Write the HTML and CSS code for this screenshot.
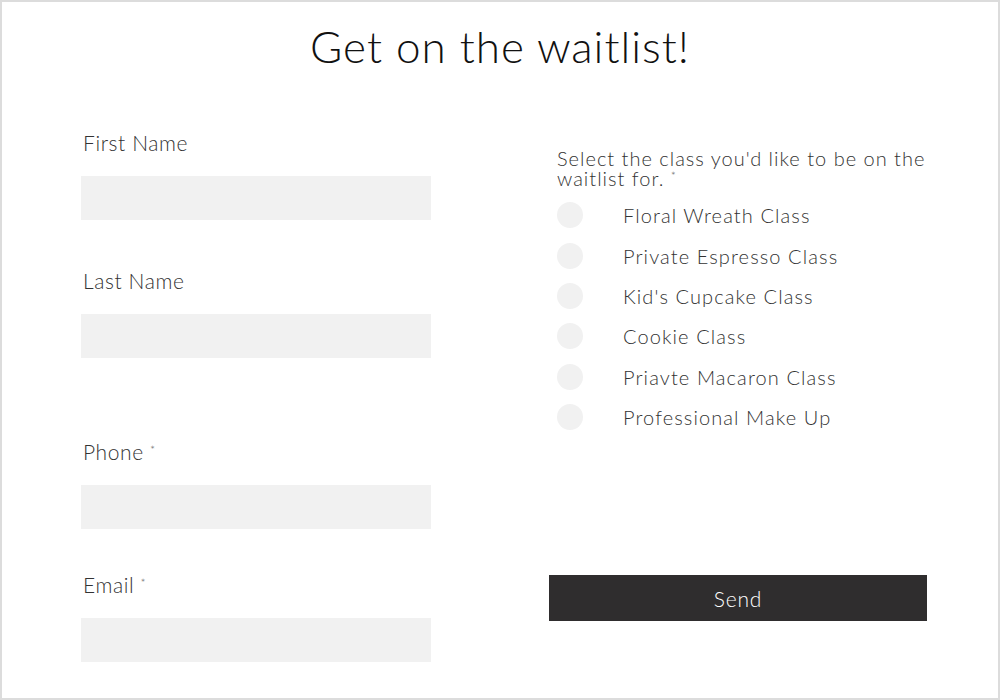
FILE: index.html
```html
<!DOCTYPE html>
<html lang="en">
<head>
    <meta charset="UTF-8">
    <meta name="viewport" content="width=device-width, initial-scale=1.0">
    <title>Get on the waitlist</title>
    <link rel="stylesheet" href="styles.css">
</head>
<body>
    <div class="page">
        <h1 class="title">Get on the waitlist!</h1>

        <form class="waitlist-form" onsubmit="return false;">
            <!-- Contact details -->
            <div class="column contact">
                <div class="field">
                    <label class="field-label" for="first-name">First Name</label>
                    <input class="field-input" id="first-name" type="text">
                </div>
                <div class="field gap-md">
                    <label class="field-label" for="last-name">Last Name</label>
                    <input class="field-input" id="last-name" type="text">
                </div>
                <div class="field gap-lg">
                    <label class="field-label" for="phone">Phone <span class="req">*</span></label>
                    <input class="field-input" id="phone" type="tel">
                </div>
                <div class="field gap-sm">
                    <label class="field-label" for="email">Email <span class="req">*</span></label>
                    <input class="field-input" id="email" type="email">
                </div>
            </div>

            <!-- Class choice -->
            <div class="column classes">
                <p class="question">Select the class you'd like to be on the waitlist for. <span class="req">*</span></p>
                <div class="options">
                    <label class="option"><input type="radio" name="class"><span>Floral Wreath Class</span></label>
                    <label class="option"><input type="radio" name="class"><span>Private Espresso Class</span></label>
                    <label class="option"><input type="radio" name="class"><span>Kid's Cupcake Class</span></label>
                    <label class="option"><input type="radio" name="class"><span>Cookie Class</span></label>
                    <label class="option"><input type="radio" name="class"><span>Priavte Macaron Class</span></label>
                    <label class="option"><input type="radio" name="class"><span>Professional Make Up</span></label>
                </div>
                <button class="send-button" type="submit">Send</button>
            </div>
        </form>
    </div>
</body>
</html>
```

FILE: styles.css
```css
body {
    margin: 0;
    font-family: Lato, "Open Sans", sans-serif;
    background-color: #fff;
    color: #333;
}
.page {
    width: 1000px;
    height: 700px;
    box-sizing: border-box;
    border: 2px solid #dcdcdc;
    overflow: hidden;
}
.title {
    margin: 18px 0 0;
    font-size: 44px;
    line-height: 52px;
    font-weight: 300;
    letter-spacing: 1px;
    color: #111;
    text-align: center;
}
.waitlist-form {
    display: grid;
    grid-template-columns: 350px 378px;
    column-gap: 118px;
    padding-left: 79px;
    margin-top: 60px;
}
.column {
    display: flex;
    flex-direction: column;
}
.field-label {
    display: block;
    font-size: 21px;
    line-height: 24px;
    letter-spacing: 0.6px;
    margin: -1px 0 21px 2px;
    font-weight: 300;
}
.field-input {
    display: block;
    width: 100%;
    height: 44px;
    box-sizing: border-box;
    border: none;
    background-color: #f1f1f1;
    padding: 0 12px;
    font: inherit;
    outline: none;
}
.gap-md {
    margin-top: 50px;
}
.gap-lg {
    margin-top: 83px;
}
.gap-sm {
    margin-top: 45px;
}
.req {
    font-size: 12px;
    line-height: 0;
    vertical-align: 0.5em;
    letter-spacing: 0;
    color: #666;
}
.question {
    margin: 16px 0 7px 8px;
    font-size: 20px;
    line-height: 20px;
    letter-spacing: 1px;
    font-weight: 300;
}
.options {
    display: flex;
    flex-direction: column;
    margin-left: 8px;
}
.option {
    display: flex;
    align-items: center;
    gap: 40px;
    height: 40.4px;
    font-size: 20px;
    letter-spacing: 1.1px;
    font-weight: 300;
    cursor: pointer;
}
.option input {
    appearance: none;
    -webkit-appearance: none;
    flex: none;
    margin: 0;
    width: 26px;
    height: 26px;
    border-radius: 50%;
    background-color: #f1f1f1;
    cursor: pointer;
}
.option input:checked {
    background: radial-gradient(circle, #2f2d2e 0 6px, #f1f1f1 7px);
}
.send-button {
    margin-top: 138px;
    height: 46px;
    border: none;
    background-color: #2f2d2e;
    color: #fff;
    font-family: inherit;
    font-size: 21px;
    font-weight: 300;
    letter-spacing: 0.8px;
    cursor: pointer;
}
.send-button:hover {
    background-color: #444;
}
```
